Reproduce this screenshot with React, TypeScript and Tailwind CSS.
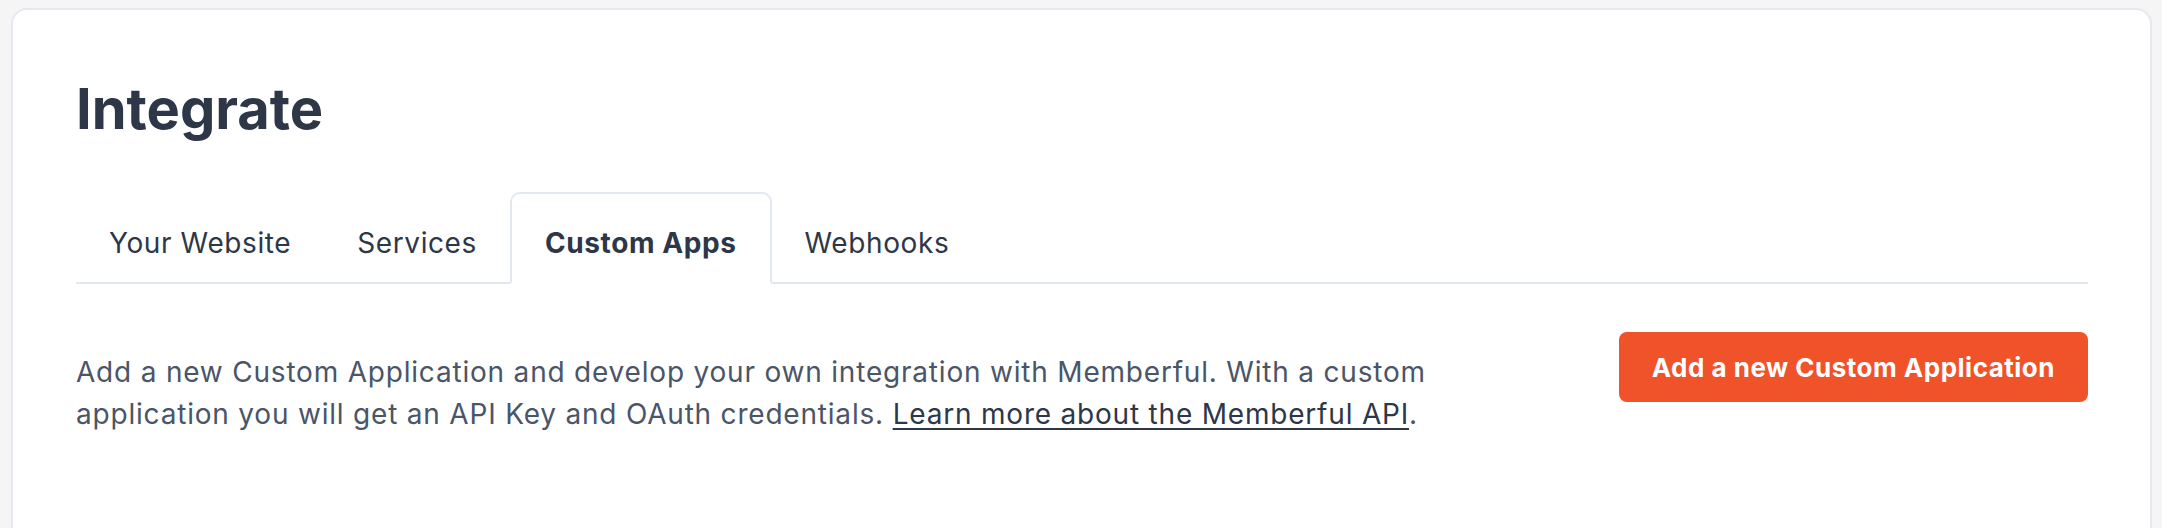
import React from "react";

const TABS = ["Your Website", "Services", "Custom Apps", "Webhooks"];

export default function App() {
  const active = "Custom Apps";

  return (
    <div
      className="h-[528px] overflow-hidden bg-[#f5f5f5] pt-[8px] pl-[11px] pr-[10px]"
      style={{ fontFamily: "Inter, 'Noto Sans', sans-serif" }}
    >
      <div className="h-[600px] rounded-[16px] border-2 border-[#e4e8ef] bg-white pt-[71px] pl-[63px] pr-[62px]">
        <h1 className="text-[56px] font-bold leading-none text-[#2d3748]">
          Integrate
        </h1>

        {/* Tabs */}
        <nav className="mt-[55px] flex border-b-2 border-[#e2e8f0]">
          {TABS.map((tab) => {
            const isActive = tab === active;
            return (
              <a
                key={tab}
                href="#"
                className={
                  isActive
                    ? "-mb-[2px] rounded-t-[10px] border-2 border-[#e2e8f0] border-b-white bg-white px-[33px] pt-[28px] pb-[18px] text-[28px] leading-[42px] font-bold tracking-[0.6px] text-[#2d3748]"
                    : "-mb-[2px] border-2 border-transparent px-[31px] pt-[28px] pb-[18px] text-[28px] leading-[42px] tracking-[0.6px] text-[#2d3748]"
                }
              >
                {tab}
              </a>
            );
          })}
        </nav>

        <div className="flex items-start justify-between pt-[48px]">
          <p className="mt-[19px] max-w-[1440px] text-[28px] leading-[42px] tracking-[0.8px] text-[#4a5568]">
            Add a new Custom Application and develop your own integration with
            Memberful. With a custom application you will get an API Key and
            OAuth credentials.{" "}
            <a
              href="#"
              className="text-[#2d3748] underline decoration-2 underline-offset-[4px]"
            >
              Learn more about the Memberful API
            </a>
            .
          </p>

          <button className="flex h-[70px] shrink-0 items-center rounded-[8px] bg-[#f05229] px-[33px] text-[26px] font-bold tracking-[0.5px] text-white">
            Add a new Custom Application
          </button>
        </div>
      </div>
    </div>
  );
}
